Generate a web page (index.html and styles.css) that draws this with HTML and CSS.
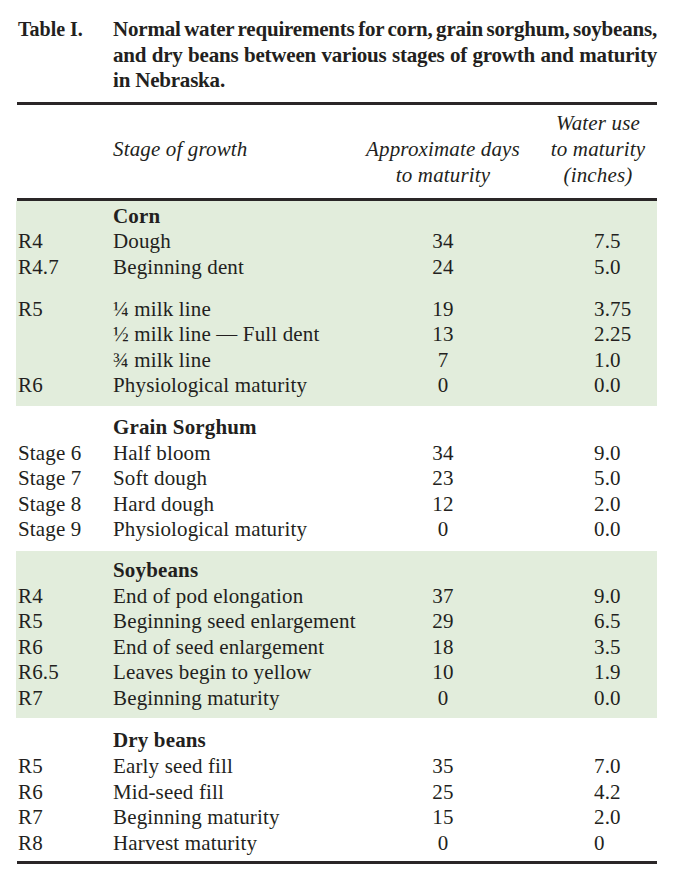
FILE: index.html
```html
<!DOCTYPE html>
<html lang="en">
<head>
<meta charset="utf-8">
<title>Table I. Normal water requirements</title>
<link rel="stylesheet" href="styles.css">
</head>
<body>
<div class="page">
  <div class="caption">
    <div class="cap-label">Table I.</div>
    <div class="cap-text">
      <span class="line just">Normal water requirements for corn, grain sorghum, soybeans,</span>
      <span class="line just">and dry beans between various stages of growth and maturity</span>
      <span class="line">in Nebraska.</span>
    </div>
  </div>

  <div class="rule"></div>

  <div class="head">
    <div class="h-stage">Stage of growth</div>
    <div class="h-days">Approximate days<br>to maturity</div>
    <div class="h-water">Water use<br>to maturity<br>(inches)</div>
  </div>

  <div class="rule"></div>

  <div class="section green corn">
    <div class="row"><span></span><span class="crop">Corn</span><span></span><span></span></div>
    <div class="row"><span>R4</span><span>Dough</span><span class="days">34</span><span class="water">7.5</span></div>
    <div class="row"><span>R4.7</span><span>Beginning dent</span><span class="days">24</span><span class="water">5.0</span></div>
    <div class="row gap"><span>R5</span><span>¼ milk line</span><span class="days">19</span><span class="water">3.75</span></div>
    <div class="row"><span></span><span>½ milk line — Full dent</span><span class="days">13</span><span class="water">2.25</span></div>
    <div class="row"><span></span><span>¾ milk line</span><span class="days">7</span><span class="water">1.0</span></div>
    <div class="row"><span>R6</span><span>Physiological maturity</span><span class="days">0</span><span class="water">0.0</span></div>
  </div>

  <div class="section sorghum">
    <div class="row"><span></span><span class="crop">Grain Sorghum</span><span></span><span></span></div>
    <div class="row"><span>Stage 6</span><span>Half bloom</span><span class="days">34</span><span class="water">9.0</span></div>
    <div class="row"><span>Stage 7</span><span>Soft dough</span><span class="days">23</span><span class="water">5.0</span></div>
    <div class="row"><span>Stage 8</span><span>Hard dough</span><span class="days">12</span><span class="water">2.0</span></div>
    <div class="row"><span>Stage 9</span><span>Physiological maturity</span><span class="days">0</span><span class="water">0.0</span></div>
  </div>

  <div class="section green soy">
    <div class="row"><span></span><span class="crop">Soybeans</span><span></span><span></span></div>
    <div class="row"><span>R4</span><span>End of pod elongation</span><span class="days">37</span><span class="water">9.0</span></div>
    <div class="row"><span>R5</span><span>Beginning seed enlargement</span><span class="days">29</span><span class="water">6.5</span></div>
    <div class="row"><span>R6</span><span>End of seed enlargement</span><span class="days">18</span><span class="water">3.5</span></div>
    <div class="row"><span>R6.5</span><span>Leaves begin to yellow</span><span class="days">10</span><span class="water">1.9</span></div>
    <div class="row"><span>R7</span><span>Beginning maturity</span><span class="days">0</span><span class="water">0.0</span></div>
  </div>

  <div class="section drybeans">
    <div class="row"><span></span><span class="crop">Dry beans</span><span></span><span></span></div>
    <div class="row"><span>R5</span><span>Early seed fill</span><span class="days">35</span><span class="water">7.0</span></div>
    <div class="row"><span>R6</span><span>Mid-seed fill</span><span class="days">25</span><span class="water">4.2</span></div>
    <div class="row"><span>R7</span><span>Beginning maturity</span><span class="days">15</span><span class="water">2.0</span></div>
    <div class="row"><span>R8</span><span>Harvest maturity</span><span class="days">0</span><span class="water">0</span></div>
  </div>

  <div class="rule"></div>
</div>
</body>
</html>
```
FILE: styles.css
```css
html, body {
  margin: 0;
  padding: 0;
  background: #ffffff;
}

body {
  font-family: "Liberation Serif", "Times New Roman", serif;
  font-size: 21px;
  color: #231f20;
}

.page {
  width: 641px;
  margin-left: 16px;
  padding-top: 17px;
}

/* caption */
.caption {
  display: grid;
  grid-template-columns: 97px 544px;
  font-weight: bold;
  line-height: 25.6px;
}

.cap-label {
  padding-left: 2px;
  font-size: 20px;
}

.cap-text {
  font-size: 21px;
  letter-spacing: -0.2px;
}

.line {
  display: block;
}

.just {
  text-align: justify;
  text-align-last: justify;
  word-spacing: -3px;
}

.rule {
  height: 3px;
  background: #2a2627;
  margin-left: 1px;
}

.caption + .rule {
  margin-top: 8px;
}

/* header */
.head {
  display: grid;
  grid-template-columns: 97px 250px 160px 134px;
  font-style: italic;
  letter-spacing: 0.15px;
  line-height: 26px;
  padding-top: 5px;
  padding-bottom: 10px;
}

.h-stage {
  grid-column: 2;
  align-self: center;
}

.h-days {
  grid-column: 3;
  align-self: end;
  text-align: center;
}

.h-water {
  grid-column: 4;
  text-align: center;
  padding-left: 16px;
}

/* body sections */
.section {
  line-height: 25.6px;
  letter-spacing: 0.15px;
}

.green {
  background: #e2eddc;
}

.row {
  display: grid;
  grid-template-columns: 97px 250px 160px 134px;
  white-space: nowrap;
}

.row > span:first-child {
  padding-left: 2px;
}

.row.gap {
  margin-top: 16px;
}

.crop {
  font-weight: bold;
}

.days {
  text-align: center;
}

.water {
  padding-left: 71px;
}

.corn {
  padding-top: 3px;
  padding-bottom: 7px;
}

.sorghum {
  padding-top: 9px;
  padding-bottom: 8px;
}

.soy {
  padding-top: 7px;
  padding-bottom: 7px;
}

.drybeans {
  padding-top: 10px;
  padding-bottom: 4.5px;
}
```
